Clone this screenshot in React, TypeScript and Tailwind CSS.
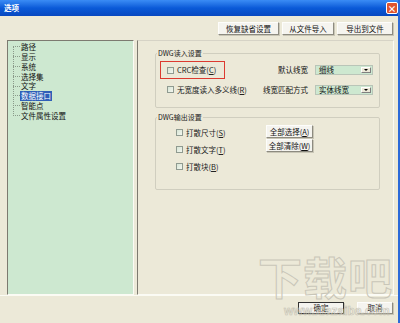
import React from "react";

const font = { fontFamily: '"Noto Sans CJK SC", "Liberation Sans", sans-serif' };

function Btn({ children, className = "" }: { children: React.ReactNode; className?: string }) {
  return (
    <div
      className={
        "flex items-center justify-center bg-[#f5f4ef] border border-t-[#fdfdfb] border-l-[#fdfdfb] border-r-[#8d8b80] border-b-[#8d8b80] shadow-[1px_1px_0_#c9c6b6] text-[7.5px] leading-none text-[#111] whitespace-nowrap " +
        className
      }
    >
      {children}
    </div>
  );
}

function Check() {
  return (
    <div className="w-[7px] h-[7px] border border-[#8f9a90] bg-gradient-to-br from-[#d7e5d5] to-[#f3f6ef] shrink-0" />
  );
}

function Dropdown({ text }: { text: string }) {
  return (
    <div className="w-[58px] h-[10px] flex items-stretch border border-[#b9c5b8] bg-[#cde8d0]">
      <div className="flex-1 flex items-center pl-[3px] text-[7.5px] leading-none text-[#111]">{text}</div>
      <div className="w-[10px] my-[1px] mr-[1px] bg-[#ece9d8] border border-r-[#808080] border-b-[#808080] border-t-white border-l-white flex items-center justify-center">
        <div className="w-0 h-0 border-l-[2px] border-r-[2px] border-t-[2px] border-l-transparent border-r-transparent border-t-black" />
      </div>
    </div>
  );
}

const tree = ["路径", "显示", "系统", "选择集", "文字", "数据接口", "智能点", "文件属性设置"];

export default function App() {
  return (
    <div className="relative w-[400px] h-[323px] bg-[#ece9d8] overflow-hidden" style={font}>
      {/* title bar */}
      <div className="h-[16px] flex items-center justify-between bg-gradient-to-b from-[#3a8cf5] via-[#0a5ad8] to-[#0848c0] pl-[4px] pr-[2px]">
        <span className="text-white text-[7.5px] font-bold leading-none">选项</span>
        <div className="w-[12px] h-[12px] rounded-[2px] bg-[#e0542e] border border-white flex items-center justify-center text-white text-[9px] font-bold leading-none">
          ×
        </div>
      </div>
      {/* blue right edge */}
      <div className="absolute right-0 top-0 w-[2px] h-full bg-[#2c6ad8]" />

      {/* top buttons */}
      <div className="flex justify-end gap-[3px] pt-[6px] pr-[7px]">
        <Btn className="w-[61px] h-[13px]">恢复缺省设置</Btn>
        <Btn className="w-[52px] h-[13px]">从文件导入</Btn>
        <Btn className="w-[56px] h-[13px]">导出到文件</Btn>
      </div>

      {/* main area */}
      <div className="flex gap-[3px] pl-[7px] mt-[5px] h-[255px]">
        {/* tree */}
        <div className="w-[127px] h-full bg-[#cde8d0] border border-l-[#7d7a70] border-t-[#7d7a70] border-r-[#fbfbf5] border-b-[#fbfbf5] pt-[1px]">
          <div className="relative pl-[5px]">
            <div className="absolute left-[5px] top-[4px] h-[70px] border-l border-dotted border-[#8a9a8a]" />
            {tree.map((t, i) => (
              <div key={t} className="flex items-center h-[9.8px]">
                <div className="w-[7px] border-t border-dotted border-[#8a9a8a]" />
                <span
                  className={
                    "text-[7.5px] leading-none px-[1px] py-[1px] whitespace-nowrap " +
                    (i === 5 ? "bg-[#2f5fb8] text-white" : "text-[#111]")
                  }
                >
                  {t}
                </span>
              </div>
            ))}
          </div>
        </div>

        {/* right panel */}
        <div className="w-[257px] h-full border border-l-[#7d7a70] border-t-[#d6d3c6] border-r-[#fbfbf5] border-b-[#fbfbf5] pt-[8px] pl-[17px] pr-[13px]">
          <fieldset className="h-[59px] border border-[#d0cebf] rounded-[2px] px-0">
            <legend className="ml-[1px] px-[1px] text-[7px] leading-[9px] text-[#222]">DWG读入设置</legend>
            <div className="flex items-center mt-[3px] h-[18px]">
              <div className="w-[105px] shrink-0">
                <div className="ml-[4px] w-[65px] h-[18px] border border-[#dc3a30] flex items-center pl-[6px] gap-[3px]">
                  <Check />
                  <span className="text-[7.5px] leading-none text-[#222] whitespace-nowrap">CRC检查(<u>C</u>)</span>
                </div>
              </div>
              <div className="w-[47px] text-right text-[7.5px] leading-none text-[#111] whitespace-nowrap">默认线宽</div>
              <div className="ml-[7px]">
                <Dropdown text="细线" />
              </div>
            </div>
            <div className="flex items-center mt-[5px] h-[11px]">
              <div className="w-[105px] shrink-0 flex items-center pl-[11px] gap-[3px]">
                <Check />
                <span className="text-[7.5px] leading-none text-[#222] whitespace-nowrap">无宽度读入多义线(<u>R</u>)</span>
              </div>
              <div className="w-[47px] flex justify-end text-[7.5px] leading-none text-[#111] whitespace-nowrap">
                <span>线宽匹配方式</span>
              </div>
              <div className="ml-[7px]">
                <Dropdown text="实体线宽" />
              </div>
            </div>
          </fieldset>

          <fieldset className="mt-[5px] h-[77px] border border-[#d0cebf] rounded-[2px] px-0">
            <legend className="ml-[1px] px-[1px] text-[7px] leading-[9px] text-[#222]">DWG输出设置</legend>
            <div className="flex">
              <div className="w-[110px] pl-[20px] pt-[7px] flex flex-col gap-[10px]">
                {[
                  ["打散尺寸(", "S", ")"],
                  ["打散文字(", "T", ")"],
                  ["打散块(", "B", ")"],
                ].map(([a, b, c]) => (
                  <div key={a} className="flex items-center gap-[3px] h-[7px]">
                    <Check />
                    <span className="text-[7.5px] leading-none text-[#222] whitespace-nowrap">
                      {a}
                      <u>{b}</u>
                      {c}
                    </span>
                  </div>
                ))}
              </div>
              <div className="pt-[3px] flex flex-col gap-[1px]">
                <Btn className="w-[47px] h-[13px]">
                  全部选择(<u>A</u>)
                </Btn>
                <Btn className="w-[47px] h-[13px]">
                  全部清除(<u>W</u>)
                </Btn>
              </div>
            </div>
          </fieldset>
        </div>
      </div>

      {/* bottom separator */}
      <div className="h-[1px] bg-[#fbfbf3] mt-[0px] mr-[2px]" />

      {/* bottom buttons */}
      <div className="flex justify-end gap-[13px] pt-[6px] pr-[7px]">
        <Btn className="w-[46px] h-[12px] !border-[#333]">确定</Btn>
        <Btn className="w-[36px] h-[12px]">取消</Btn>
      </div>

      {/* watermark */}
      <div className="absolute left-[258px] top-[254px] pointer-events-none select-none">
        <div
          className="text-[44px] font-bold leading-none tracking-[1px] text-transparent"
          style={{ WebkitTextStroke: "1px #c9c6b8", fontFamily: '"Noto Sans CJK SC", sans-serif' }}
        >
          下载吧
        </div>
      </div>
      <div
        className="absolute left-[284px] top-[305px] text-[12px] font-bold leading-none text-transparent pointer-events-none"
        style={{ WebkitTextStroke: "0.6px #c4c1b3", fontFamily: '"Liberation Sans", sans-serif' }}
      >
        www.xiazaiba.com
      </div>
    </div>
  );
}
